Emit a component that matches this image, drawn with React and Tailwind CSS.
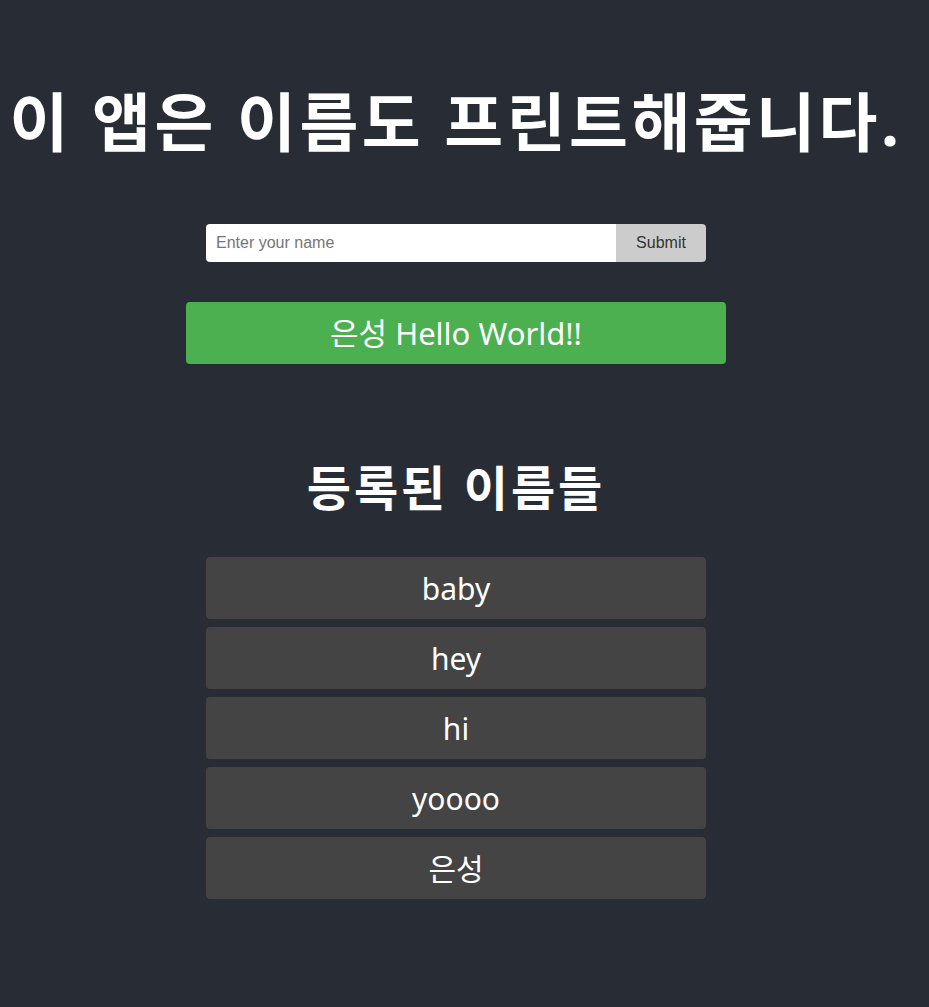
import React, { useState } from 'react';

const App = () => {
  const [name, setName] = useState('');
  const [names, setNames] = useState(['baby', 'hey', 'hi', 'yoooo', '은성']);

  const handleSubmit = (e) => {
    e.preventDefault();
    if (!name.trim()) return;
    setNames([...names, name.trim()]);
    setName('');
  };

  return (
    <div className="min-h-screen bg-[#282c34] text-white font-['Noto_Sans','Noto_Sans_CJK_KR',sans-serif]">
      <div className="w-[912px] flex flex-col items-center text-center pt-[87px] pb-10">
        <h1 className="text-[64px] leading-[70px] font-bold tracking-[3.5px] whitespace-nowrap">
          이 앱은 이름도 프린트해줍니다.
        </h1>

        <form onSubmit={handleSubmit} className="mt-[67px] flex w-[500px] h-[38px] rounded overflow-hidden">
          <input
            value={name}
            onChange={(e) => setName(e.target.value)}
            placeholder="Enter your name"
            className="flex-1 bg-white text-[#333] px-[10px] text-base outline-none placeholder:text-[#757575] font-['Liberation_Sans',Arial,sans-serif]"
          />
          <button
            type="submit"
            className="w-[90px] bg-[#cccccc] text-[#333] text-base font-['Liberation_Sans',Arial,sans-serif]"
          >
            Submit
          </button>
        </form>

        <div className="mt-[40px] w-[540px] h-[62px] bg-[#4caf50] rounded flex items-center justify-center text-[31px]">
          은성 Hello World!!
        </div>

        <h2 className="mt-[97px] text-[48px] leading-[54px] font-bold tracking-[3px]">등록된 이름들</h2>

        <ul className="mt-[42px] w-[500px] flex flex-col gap-2">
          {names.map((n, i) => (
            <li key={i} className="h-[62px] bg-[#444444] rounded flex items-center justify-center text-[30px]">
              {n}
            </li>
          ))}
        </ul>
      </div>
    </div>
  );
};

export default App;
